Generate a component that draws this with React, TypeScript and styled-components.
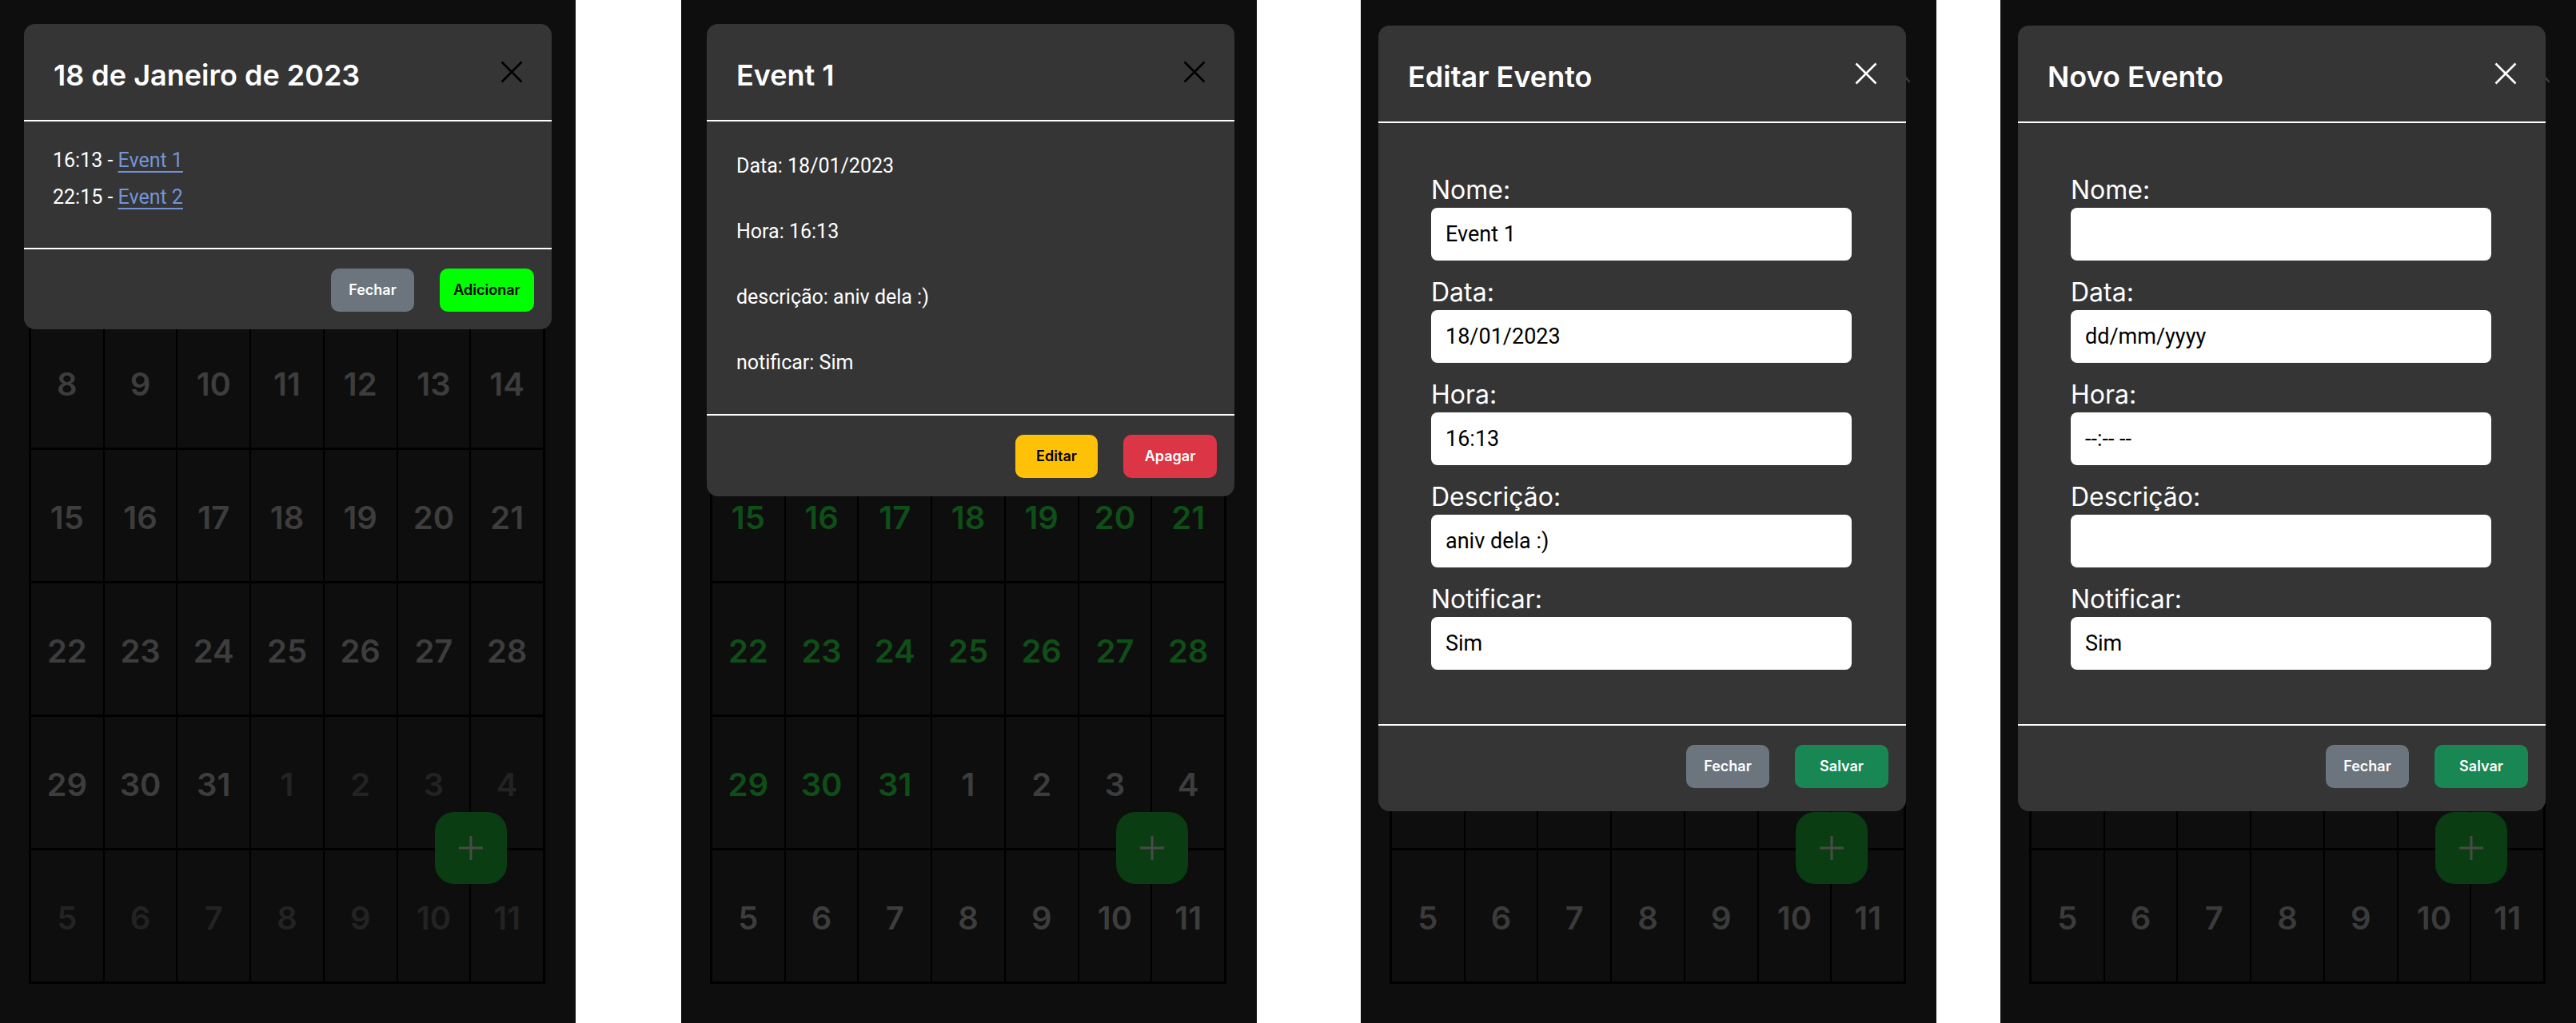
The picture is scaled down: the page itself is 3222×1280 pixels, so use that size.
import React from 'react';
import styled, { createGlobalStyle } from 'styled-components';

const GlobalStyle = createGlobalStyle`
  html, body {
    margin: 0;
    padding: 0;
    background: #ffffff;
  }
  body {
    font-family: Inter, "Noto Sans", sans-serif;
  }
  * {
    box-sizing: border-box;
  }
`;

const Strip = styled.main`
  display: flex;
  width: 3222px;
  height: 1280px;
  background: #ffffff;
  overflow: hidden;
`;

const Phone = styled.section<{ $gap: number }>`
  position: relative;
  flex: 0 0 720px;
  height: 1280px;
  margin-left: ${(p) => p.$gap}px;
  background: #0e0e0e;
  overflow: hidden;
`;

/* ---------- calendar behind the modal ---------- */

const Calendar = styled.div`
  width: 646px;
  margin-left: 36px;
`;

const CalHeader = styled.header`
  height: 226px;
  display: flex;
  justify-content: flex-end;
  align-items: flex-start;
  padding-top: 88px;
  margin-right: -6px;
`;

const Grid = styled.div`
  display: grid;
  grid-template-columns: repeat(7, 1fr);
  grid-auto-rows: 164px;
  gap: 3px 2px;
  background: #000;
  border: 3px solid #000;
`;

const Day = styled.div<{ $tone: string }>`
  background: #0e0e0e;
  display: flex;
  align-items: center;
  justify-content: center;
  padding-top: 6px;
  font: 600 40px/1 Inter, sans-serif;
  color: ${(p) => p.$tone};
`;

const Fab = styled.button`
  position: absolute;
  left: 544px;
  top: 1016px;
  width: 90px;
  height: 90px;
  padding: 0;
  border: 0;
  border-radius: 24px;
  background: #0a3d12;
  display: flex;
  align-items: center;
  justify-content: center;
`;

/* ---------- modal ---------- */

const Modal = styled.div<{ $left: number; $top: number }>`
  position: absolute;
  left: ${(p) => p.$left}px;
  top: ${(p) => p.$top}px;
  width: 660px;
  background: #353535;
  border-radius: 14px;
  overflow: hidden;
  color: #fff;
`;

const ModalHeader = styled.div`
  height: 122px;
  display: flex;
  align-items: center;
  justify-content: space-between;
  padding: 0 36px 0 37px;
  border-bottom: 2px solid #fff;
`;

const Title = styled.h5`
  margin: 10px 0 0;
  font: 600 36px/1.2 Inter, sans-serif;
  color: #fff;
`;

const Close = styled.button<{ $color: string }>`
  width: 28px;
  height: 28px;
  padding: 0;
  border: 0;
  background: none;
  color: ${(p) => p.$color};
  display: flex;
`;

const ListBody = styled.div`
  padding: 26px 36px 40px;
  font: 400 25px/46px Roboto, sans-serif;
`;

const EventLink = styled.a`
  color: #7394d8;
  text-decoration: underline;
  text-decoration-thickness: 2px;
  text-underline-offset: 5px;
`;

const DetailBody = styled.div`
  padding: 37px 37px 45px;
  font: 400 25px/38px Roboto, sans-serif;

  p {
    margin: 0 0 44px;
  }
  p:last-child {
    margin-bottom: 0;
  }
`;

const FormBody = styled.form`
  display: flex;
  flex-direction: column;
  gap: 20px;
  padding: 64px 68px 68px 66px;
`;

const Field = styled.label`
  display: flex;
  flex-direction: column;
  gap: 2px;
`;

const FieldName = styled.span`
  font: 400 32px/40px Inter, sans-serif;
  color: #fff;
`;

const Input = styled.input`
  width: 526px;
  height: 66px;
  border: 0;
  border-radius: 8px;
  background: #fff;
  padding: 0 18px;
  font: 400 27px Roboto, sans-serif;
  color: #000;
  outline: none;
`;

const Select = styled.select`
  width: 526px;
  height: 66px;
  border: 0;
  border-radius: 8px;
  background: #fff;
  padding: 0 18px;
  font: 400 27px Roboto, sans-serif;
  color: #000;
  appearance: none;
  outline: none;
`;

const Footer = styled.div<{ $bottom: number }>`
  display: flex;
  justify-content: flex-end;
  gap: 32px;
  padding: 24px 22px ${(p) => p.$bottom}px;
  border-top: 2px solid #fff;
`;

const Button = styled.button<{ $bg: string; $fg: string; $w: number }>`
  width: ${(p) => p.$w}px;
  height: 54px;
  padding: 0;
  border: 0;
  border-radius: 10px;
  background: ${(p) => p.$bg};
  color: ${(p) => p.$fg};
  font: 600 18px/1 Inter, sans-serif;
`;

/* ---------- pieces ---------- */

const CloseIcon = ({ color }: { color: string }) => (
  <Close $color={color} aria-label="Fechar">
    <svg width="28" height="28" viewBox="0 0 28 28" fill="none">
      <path d="M1.5 1.5L26.5 26.5M26.5 1.5L1.5 26.5" stroke="currentColor" strokeWidth="2.6" />
    </svg>
  </Close>
);

type Tone = 'dim' | 'green' | 'gray';

const palette: Record<Tone, { cur: string; other: string }> = {
  dim: { cur: '#3d3d3d', other: '#232323' },
  green: { cur: '#0e4f17', other: '#3d3d3d' },
  gray: { cur: '#3b3b3b', other: '#3b3b3b' },
};

const days: { n: number; cur: boolean }[] = [
  ...Array.from({ length: 31 }, (_, i) => ({ n: i + 1, cur: true })),
  ...Array.from({ length: 11 }, (_, i) => ({ n: i + 1, cur: false })),
];

const MonthGrid = ({ tone }: { tone: Tone }) => (
  <Calendar>
    <CalHeader>
      <svg width="24" height="16" viewBox="0 0 24 16" fill="none">
        <path d="M2 14L12 3L22 14" stroke="#3a3a3a" strokeWidth="2.6" strokeLinecap="round" />
      </svg>
    </CalHeader>
    <Grid>
      {days.map((d, i) => (
        <Day key={i} $tone={d.cur ? palette[tone].cur : palette[tone].other}>
          {d.n}
        </Day>
      ))}
    </Grid>
  </Calendar>
);

const AddButton = () => (
  <Fab aria-label="Adicionar evento">
    <svg width="32" height="32" viewBox="0 0 32 32">
      <path d="M16 1V31M1 16H31" stroke="#4a4a4a" strokeWidth="3" />
    </svg>
  </Fab>
);

const DayModal = () => (
  <Modal $left={30} $top={30}>
    <ModalHeader>
      <Title>18 de Janeiro de 2023</Title>
      <CloseIcon color="#000" />
    </ModalHeader>
    <ListBody>
      <div>
        16:13 - <EventLink href="#">Event 1</EventLink>
      </div>
      <div>
        22:15 - <EventLink href="#">Event 2</EventLink>
      </div>
    </ListBody>
    <Footer $bottom={22}>
      <Button $bg="#6c757d" $fg="#fff" $w={104}>Fechar</Button>
      <Button $bg="#00ff00" $fg="#000" $w={118}>Adicionar</Button>
    </Footer>
  </Modal>
);

const EventModal = () => (
  <Modal $left={32} $top={30}>
    <ModalHeader>
      <Title>Event 1</Title>
      <CloseIcon color="#000" />
    </ModalHeader>
    <DetailBody>
      <p>Data: 18/01/2023</p>
      <p>Hora: 16:13</p>
      <p>descrição: aniv dela :)</p>
      <p>notificar: Sim</p>
    </DetailBody>
    <Footer $bottom={23}>
      <Button $bg="#ffc107" $fg="#000" $w={103}>Editar</Button>
      <Button $bg="#dc3545" $fg="#fff" $w={117}>Apagar</Button>
    </Footer>
  </Modal>
);

type FormValues = { nome: string; data: string; hora: string; desc: string };

const FormModal = ({ title, values }: { title: string; values: FormValues }) => (
  <Modal $left={22} $top={32}>
    <ModalHeader>
      <Title>{title}</Title>
      <CloseIcon color="#fff" />
    </ModalHeader>
    <FormBody onSubmit={(e) => e.preventDefault()}>
      <Field>
        <FieldName>Nome:</FieldName>
        <Input defaultValue={values.nome} />
      </Field>
      <Field>
        <FieldName>Data:</FieldName>
        <Input defaultValue={values.data} />
      </Field>
      <Field>
        <FieldName>Hora:</FieldName>
        <Input defaultValue={values.hora} />
      </Field>
      <Field>
        <FieldName>Descrição:</FieldName>
        <Input defaultValue={values.desc} />
      </Field>
      <Field>
        <FieldName>Notificar:</FieldName>
        <Select defaultValue="sim">
          <option value="sim">Sim</option>
          <option value="nao">Não</option>
        </Select>
      </Field>
    </FormBody>
    <Footer $bottom={29}>
      <Button $bg="#6c757d" $fg="#fff" $w={104}>Fechar</Button>
      <Button $bg="#198754" $fg="#fff" $w={117}>Salvar</Button>
    </Footer>
  </Modal>
);

export default function App() {
  return (
    <>
      <GlobalStyle />
      <Strip>
        <Phone $gap={0}>
          <MonthGrid tone="dim" />
          <AddButton />
          <DayModal />
        </Phone>
        <Phone $gap={132}>
          <MonthGrid tone="green" />
          <AddButton />
          <EventModal />
        </Phone>
        <Phone $gap={130}>
          <MonthGrid tone="gray" />
          <AddButton />
          <FormModal
            title="Editar Evento"
            values={{ nome: 'Event 1', data: '18/01/2023', hora: '16:13', desc: 'aniv dela :)' }}
          />
        </Phone>
        <Phone $gap={80}>
          <MonthGrid tone="gray" />
          <AddButton />
          <FormModal
            title="Novo Evento"
            values={{ nome: '', data: 'dd/mm/yyyy', hora: '--:-- --', desc: '' }}
          />
        </Phone>
      </Strip>
    </>
  );
}
